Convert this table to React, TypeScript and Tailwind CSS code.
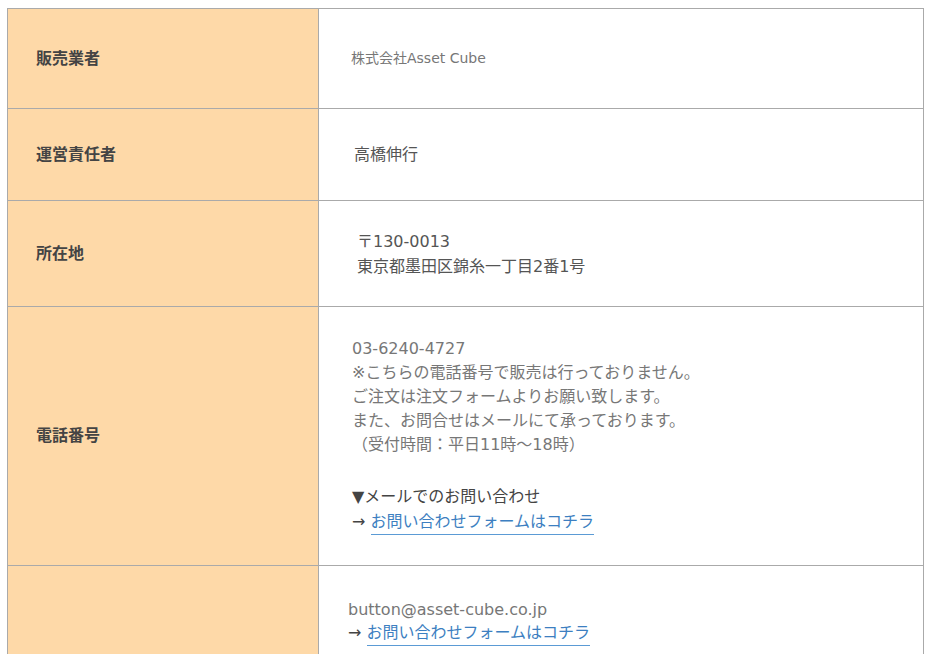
import React from "react"

const font = { fontFamily: '"DejaVu Sans", "Noto Sans CJK JP", sans-serif' }

function ContactLink() {
  return (
    <span className="text-[#444]">
      →{" "}
      <a href="#" className="text-[#3d7fc1] border-b border-[#5b9bd5] pb-[3px]">
        お問い合わせフォームはコチラ
      </a>
    </span>
  )
}

interface Row {
  label: string
  height: string
  body: React.ReactNode
}

const rows: Row[] = [
  {
    label: "販売業者",
    height: "h-[100px]",
    body: <div className="pl-[32px] text-[14px] text-[#777]">株式会社Asset Cube</div>,
  },
  {
    label: "運営責任者",
    height: "h-[92px]",
    body: <div className="pl-[35px] text-[16px] text-[#555]">高橋伸行</div>,
  },
  {
    label: "所在地",
    height: "h-[106px]",
    body: (
      <div className="pl-[38px] text-[16px] leading-[25px] text-[#555]">
        〒130-0013
        <br />
        東京都墨田区錦糸一丁目2番1号
      </div>
    ),
  },
  {
    label: "電話番号",
    height: "h-[259px]",
    body: (
      <div className="pl-[33px] text-[16px] leading-[24px] text-[#777]">
        <p>
          03-6240-4727
          <br />
          ※こちらの電話番号で販売は行っておりません。
          <br />
          ご注文は注文フォームよりお願い致します。
          <br />
          また、お問合せはメールにて承っております。
          <br />
          （受付時間：平日11時～18時）
        </p>
        <p className="mt-[28px] text-[#444]">
          ▼メールでのお問い合わせ
          <br />
          <span className="leading-[26px]">
            <ContactLink />
          </span>
        </p>
      </div>
    ),
  },
  {
    label: "",
    height: "h-[111px]",
    body: (
      <div className="pl-[29px] text-[16px] leading-[23px] text-[#777]">
        button@asset-cube.co.jp
        <br />
        <ContactLink />
      </div>
    ),
  },
]

export default function App() {
  return (
    <div className="min-h-screen bg-white pt-[8px] pl-[7px]" style={font}>
      <table className="w-[917px] border-collapse">
        <tbody>
          {rows.map((r, i) => (
            <tr key={i} className={r.height}>
              <th className="w-[311px] border border-[#aaa] bg-[#fed9a8] pl-[28px] text-left align-middle text-[16px] font-bold text-[#444]">
                {r.label}
              </th>
              <td className="border border-[#aaa] bg-white align-middle">{r.body}</td>
            </tr>
          ))}
        </tbody>
      </table>
    </div>
  )
}
